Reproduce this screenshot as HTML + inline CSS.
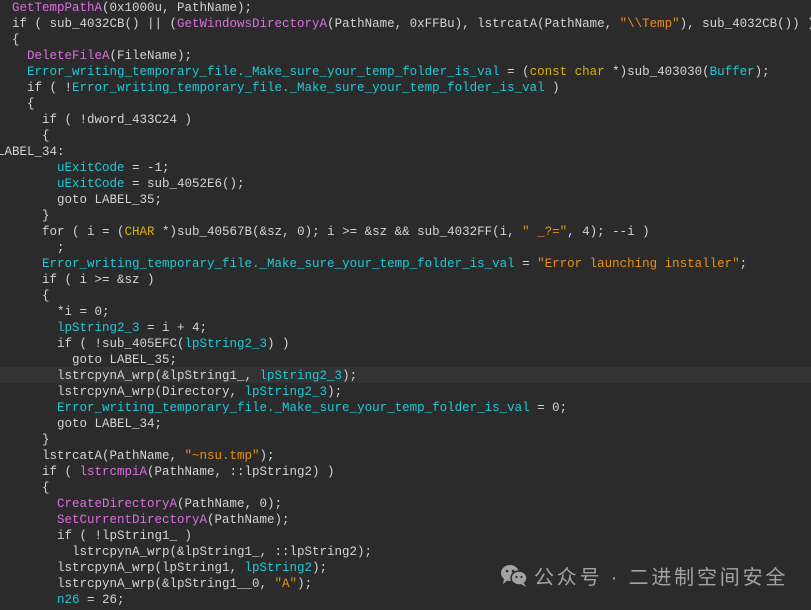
<!DOCTYPE html>
<html><head><meta charset="utf-8"><style>
html,body{margin:0;padding:0;width:811px;height:610px;overflow:hidden;background:#2b2b2b;}
pre{position:absolute;left:-3px;top:0px;margin:0;font-family:"Liberation Mono",monospace;font-size:12.5px;line-height:16px;color:#d4d4d4;white-space:pre;}
.p{color:#dc6ee0}.c{color:#1fc9d8}.o{color:#e8901a}.y{color:#d8b400}
.hl{position:absolute;left:0;top:367px;width:811px;height:16px;background:#333333;}
.wm{position:absolute;left:500px;top:563px;font-family:"Liberation Sans","Noto Sans CJK SC",sans-serif;font-size:20px;line-height:30px;color:#a3a3a3;letter-spacing:2.8px;white-space:nowrap;}
</style></head><body>
<div class="hl"></div>
<pre>  <span class="p">GetTempPathA</span>(0x1000u, PathName);
  if ( sub_4032CB() || (<span class="p">GetWindowsDirectoryA</span>(PathName, 0xFFBu), lstrcatA(PathName, <span class="o">"\\Temp"</span>), sub_4032CB()) )
  {
    <span class="p">DeleteFileA</span>(FileName);
    <span class="c">Error_writing_temporary_file._Make_sure_your_temp_folder_is_val</span> = (<span class="y">const char</span> *)sub_403030(<span class="c">Buffer</span>);
    if ( !<span class="c">Error_writing_temporary_file._Make_sure_your_temp_folder_is_val</span> )
    {
      if ( !dword_433C24 )
      {
LABEL_34:
        <span class="c">uExitCode</span> = -1;
        <span class="c">uExitCode</span> = sub_4052E6();
        goto LABEL_35;
      }
      for ( i = (<span class="y">CHAR</span> *)sub_40567B(&amp;sz, 0); i &gt;= &amp;sz &amp;&amp; sub_4032FF(i, <span class="o">" _?="</span>, 4); --i )
        ;
      <span class="c">Error_writing_temporary_file._Make_sure_your_temp_folder_is_val</span> = <span class="o">"Error launching installer"</span>;
      if ( i &gt;= &amp;sz )
      {
        *i = 0;
        <span class="c">lpString2_3</span> = i + 4;
        if ( !sub_405EFC(<span class="c">lpString2_3</span>) )
          goto LABEL_35;
        lstrcpynA_wrp(&amp;lpString1_, <span class="c">lpString2_3</span>);
        lstrcpynA_wrp(Directory, <span class="c">lpString2_3</span>);
        <span class="c">Error_writing_temporary_file._Make_sure_your_temp_folder_is_val</span> = 0;
        goto LABEL_34;
      }
      lstrcatA(PathName, <span class="o">"~nsu.tmp"</span>);
      if ( <span class="p">lstrcmpiA</span>(PathName, ::lpString2) )
      {
        <span class="p">CreateDirectoryA</span>(PathName, 0);
        <span class="p">SetCurrentDirectoryA</span>(PathName);
        if ( !lpString1_ )
          lstrcpynA_wrp(&amp;lpString1_, ::lpString2);
        lstrcpynA_wrp(lpString1, <span class="c">lpString2</span>);
        lstrcpynA_wrp(&amp;lpString1__0, <span class="o">"A"</span>);
        <span class="c">n26</span> = 26;</pre>
<div class="wm"><svg width="30" height="26" viewBox="0 0 30 26" style="vertical-align:-5px;margin-right:4px"><ellipse cx="10" cy="10" rx="9" ry="8" fill="#a3a3a3"/><path d="M4 16 L3 21 L8 17Z" fill="#a3a3a3"/><ellipse cx="19" cy="15" rx="8" ry="7" fill="#a3a3a3" stroke="#2b2b2b" stroke-width="1.5"/><path d="M24 20 L26 24 L21 21Z" fill="#a3a3a3"/><circle cx="7" cy="8" r="1.3" fill="#2b2b2b"/><circle cx="13" cy="8" r="1.3" fill="#2b2b2b"/><circle cx="16.5" cy="14" r="1.1" fill="#2b2b2b"/><circle cx="21.5" cy="14" r="1.1" fill="#2b2b2b"/></svg>公众号 · 二进制空间安全</div>
</body></html>
